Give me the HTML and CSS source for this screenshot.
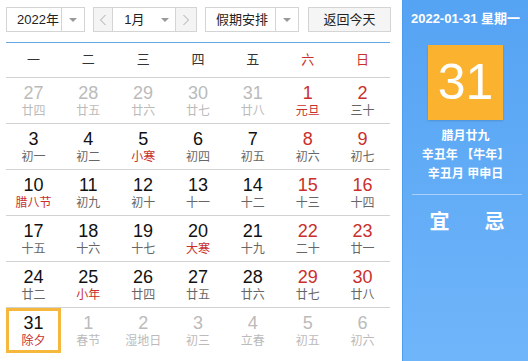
FILE: index.html
```html
<!DOCTYPE html>
<html lang="zh-CN">
<head>
    <meta charset="UTF-8">
    <meta name="viewport" content="width=device-width, initial-scale=1.0">
    <title>万年历</title>
    <link rel="stylesheet" href="styles.css">
</head>
<body>
    <div class="wrap">
        <div class="cal">
            <div class="toolbar">
                <div class="sel year">
                    <span class="sel-text">2022年</span>
                    <span class="sel-arrow"><i class="tri"></i></span>
                </div>
                <div class="sel month">
                    <span class="nav">
                        <svg width="8" height="12" viewBox="0 0 8 12"><polyline points="6.5,1 1.5,6 6.5,11" fill="none" stroke="#aaa" stroke-width="1"/></svg>
                    </span>
                    <span class="sel-text">1月</span>
                    <span class="mon-arrow"><i class="tri"></i></span>
                    <span class="nav next">
                        <svg width="8" height="12" viewBox="0 0 8 12"><polyline points="1.5,1 6.5,6 1.5,11" fill="none" stroke="#aaa" stroke-width="1"/></svg>
                    </span>
                </div>
                <div class="sel holiday">
                    <span class="sel-text">假期安排</span>
                    <span class="sel-arrow"><i class="tri"></i></span>
                </div>
                <div class="btn-today">返回今天</div>
            </div>

            <div class="grid">
                <div class="week head">
                    <span>一</span><span>二</span><span>三</span><span>四</span><span>五</span><span class="red">六</span><span class="red">日</span>
                </div>
                <div class="week">
                    <div class="day other"><b>27</b><em>廿四</em></div>
                    <div class="day other"><b>28</b><em>廿五</em></div>
                    <div class="day other"><b>29</b><em>廿六</em></div>
                    <div class="day other"><b>30</b><em>廿七</em></div>
                    <div class="day other"><b>31</b><em>廿八</em></div>
                    <div class="day wkd"><b>1</b><em class="fest">元旦</em></div>
                    <div class="day wkd"><b>2</b><em>三十</em></div>
                </div>
                <div class="week">
                    <div class="day"><b>3</b><em>初一</em></div>
                    <div class="day"><b>4</b><em>初二</em></div>
                    <div class="day"><b>5</b><em class="fest">小寒</em></div>
                    <div class="day"><b>6</b><em>初四</em></div>
                    <div class="day"><b>7</b><em>初五</em></div>
                    <div class="day wkd"><b>8</b><em>初六</em></div>
                    <div class="day wkd"><b>9</b><em>初七</em></div>
                </div>
                <div class="week">
                    <div class="day"><b>10</b><em class="fest">腊八节</em></div>
                    <div class="day"><b>11</b><em>初九</em></div>
                    <div class="day"><b>12</b><em>初十</em></div>
                    <div class="day"><b>13</b><em>十一</em></div>
                    <div class="day"><b>14</b><em>十二</em></div>
                    <div class="day wkd"><b>15</b><em>十三</em></div>
                    <div class="day wkd"><b>16</b><em>十四</em></div>
                </div>
                <div class="week">
                    <div class="day"><b>17</b><em>十五</em></div>
                    <div class="day"><b>18</b><em>十六</em></div>
                    <div class="day"><b>19</b><em>十七</em></div>
                    <div class="day"><b>20</b><em class="fest">大寒</em></div>
                    <div class="day"><b>21</b><em>十九</em></div>
                    <div class="day wkd"><b>22</b><em>二十</em></div>
                    <div class="day wkd"><b>23</b><em>廿一</em></div>
                </div>
                <div class="week">
                    <div class="day"><b>24</b><em>廿二</em></div>
                    <div class="day"><b>25</b><em class="fest">小年</em></div>
                    <div class="day"><b>26</b><em>廿四</em></div>
                    <div class="day"><b>27</b><em>廿五</em></div>
                    <div class="day"><b>28</b><em>廿六</em></div>
                    <div class="day wkd"><b>29</b><em>廿七</em></div>
                    <div class="day wkd"><b>30</b><em>廿八</em></div>
                </div>
                <div class="week last">
                    <div class="day today"><b>31</b><em class="fest">除夕</em></div>
                    <div class="day other"><b>1</b><em>春节</em></div>
                    <div class="day other"><b>2</b><em>湿地日</em></div>
                    <div class="day other"><b>3</b><em>初三</em></div>
                    <div class="day other"><b>4</b><em>立春</em></div>
                    <div class="day other"><b>5</b><em>初五</em></div>
                    <div class="day other"><b>6</b><em>初六</em></div>
                </div>
            </div>
        </div>

        <div class="side">
            <div class="side-date">2022-01-31 星期一</div>
            <div class="big-day">31</div>
            <div class="lunar-info">
                <p>腊月廿九</p>
                <p>辛丑年 【牛年】</p>
                <p>辛丑月 甲申日</p>
            </div>
            <div class="yiji">
                <span>宜</span>
                <span>忌</span>
            </div>
        </div>
    </div>
</body>
</html>
```

FILE: styles.css
```css
body {
    margin: 0;
    font-family: "Liberation Sans", "Noto Sans CJK SC", sans-serif;
    background: #fff;
    color: #111;
}

.wrap {
    display: flex;
    width: 528px;
    height: 361px;
    overflow: hidden;
}

.cal {
    width: 402px;
    flex: none;
}

/* toolbar */
.toolbar {
    display: flex;
    align-items: center;
    padding: 7px 0 0 6px;
    height: 25px;
}

.sel {
    display: flex;
    height: 25px;
    box-sizing: border-box;
    border: 1px solid #d4d4d4;
    background: #fff;
    font-size: 13px;
    color: #222;
    line-height: 23px;
}

.sel-text {
    padding-left: 10px;
}

.sel-arrow {
    width: 22px;
    border-left: 1px solid #d4d4d4;
    display: flex;
    align-items: center;
    justify-content: center;
}

.tri {
    display: block;
    width: 0;
    height: 0;
    border-left: 4px solid transparent;
    border-right: 4px solid transparent;
    border-top: 4px solid #999;
}

.year {
    width: 79px;
}

.year .sel-text {
    width: 45px;
}

.month {
    width: 104px;
    margin-left: 8px;
}

.month .sel-text {
    width: 36px;
    padding-left: 11px;
}

.nav {
    width: 21px;
    background: #f4f4f4;
    display: flex;
    align-items: center;
    justify-content: center;
    border-right: 1px solid #d4d4d4;
}

.nav.next {
    width: 23px;
    border-right: none;
    border-left: 1px solid #d4d4d4;
}

.mon-arrow {
    width: 22px;
    display: flex;
    align-items: center;
    justify-content: center;
}

.holiday {
    width: 94px;
    margin-left: 8px;
}

.holiday .sel-text {
    width: 60px;
}

.btn-today {
    width: 83px;
    height: 25px;
    margin-left: 9px;
    box-sizing: border-box;
    border: 1px solid #d4d4d4;
    background: #f5f5f5;
    font-size: 13px;
    line-height: 23px;
    text-align: center;
    color: #222;
}

/* calendar grid */
.grid {
    margin: 10px 0 0 6px;
    width: 384px;
    border-top: 1px solid #6aa7e6;
}

.week {
    display: grid;
    grid-template-columns: repeat(7, 1fr);
    border-bottom: 1px solid #d2d2d2;
}

.week.last {
    border-bottom: none;
}

.head span {
    height: 34px;
    line-height: 34px;
    text-align: center;
    font-size: 13px;
    color: #333;
}

.red {
    color: #c9302c !important;
}

.day {
    height: 45px;
    box-sizing: border-box;
    padding-top: 5px;
    text-align: center;
}

.day b {
    display: block;
    font-weight: normal;
    font-size: 18px;
    line-height: 20px;
    color: #111;
}

.day em {
    display: block;
    font-style: normal;
    font-size: 12px;
    line-height: 16px;
    color: #666;
}

.day.wkd b {
    color: #c9302c;
}

.day em.fest {
    color: #c9302c;
}

.day.other b,
.day.other em {
    color: #bbb;
}

.day.today {
    box-shadow: inset 0 0 0 3px #f5b83d;
}

/* right panel */
.side {
    flex: 1;
    background: linear-gradient(#55a3f3, #6fb5fa);
    border-left: 1px solid #4f9bec;
    color: #fff;
    text-align: center;
}

.side-date {
    margin-top: 11px;
    font-size: 13px;
    font-weight: bold;
    line-height: 16px;
}

.big-day {
    width: 75px;
    height: 75px;
    margin: 18px auto 0;
    background: #fbb22f;
    box-shadow: 0 1px 2px rgba(0, 0, 0, 0.15);
    font-size: 50px;
    line-height: 75px;
}

.lunar-info {
    margin-top: 7px;
    font-size: 12px;
    font-weight: bold;
}

.lunar-info p {
    margin: 0;
    line-height: 19px;
}

.yiji {
    margin: 10px 6px 0 9px;
    border-top: 1px solid #a9d0fa;
    padding-top: 16px;
    display: flex;
    justify-content: center;
    gap: 35px;
    font-size: 20px;
    font-weight: bold;
    line-height: 22px;
}
```
